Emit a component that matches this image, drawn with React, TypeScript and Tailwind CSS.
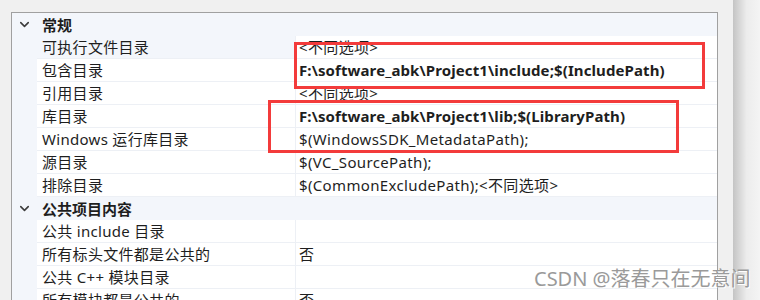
import { ChevronDown } from "lucide-react";

type Row = { name: string; value?: string; bold?: boolean; active?: boolean };

const general: Row[] = [
  { name: "可执行文件目录", value: "<不同选项>", active: true },
  { name: "包含目录", value: "F:\\software_abk\\Project1\\include;$(IncludePath)", bold: true },
  { name: "引用目录", value: "<不同选项>" },
  { name: "库目录", value: "F:\\software_abk\\Project1\\lib;$(LibraryPath)", bold: true },
  { name: "Windows 运行库目录", value: "$(WindowsSDK_MetadataPath);" },
  { name: "源目录", value: "$(VC_SourcePath);" },
  { name: "排除目录", value: "$(CommonExcludePath);<不同选项>" },
];

const publicItems: Row[] = [
  { name: "公共 include 目录" },
  { name: "所有标头文件都是公共的", value: "否" },
  { name: "公共 C++ 模块目录" },
  { name: "所有模块都是公共的", value: "否" },
];

const font = {
  fontFamily: '"Noto Sans", "Noto Sans CJK SC", sans-serif',
};

function Header({ title }: { title: string }) {
  return (
    <div className="flex h-[23px] items-center bg-[#f3f6fb]">
      <div className="flex w-[25px] justify-center">
        <ChevronDown className="h-[15px] w-[15px] text-[#3c3c3c]" strokeWidth={2.5} />
      </div>
      <span className="pl-[5px] text-[15px] font-bold leading-[22px] text-[#1e1e1e]">{title}</span>
    </div>
  );
}

function PropRow({ row }: { row: Row }) {
  return (
    <div className="flex h-[23px]">
      <div className="w-[25px] bg-[#f3f6fb]" />
      <div className="flex flex-1 border-b border-[#edf0f5]">
        <div
          className={
            row.active
              ? "w-[258px] bg-[#f3f6fb] pl-[5px] text-[15px] leading-[22px] tracking-[0.3px] text-[#1e1e1e] whitespace-nowrap"
              : "w-[258px] bg-white pl-[5px] text-[15px] leading-[22px] tracking-[0.3px] text-[#1e1e1e] whitespace-nowrap"
          }
        >
          {row.name}
        </div>
        <div
          className={
            row.bold
              ? "flex-1 border-l border-[#edf0f5] bg-white pl-[3px] text-[15px] font-bold leading-[22px] tracking-[0.1px] text-[#1e1e1e] whitespace-nowrap"
              : "flex-1 border-l border-[#edf0f5] bg-white pl-[3px] text-[15px] leading-[22px] tracking-[0.35px] text-[#1e1e1e] whitespace-nowrap"
          }
        >
          {row.value}
        </div>
      </div>
    </div>
  );
}

export default function App() {
  return (
    <div className="relative flex h-[300px] w-[760px] overflow-hidden bg-[#f0f0f0]" style={font}>
      <div className="pl-[11px] pt-[12px]">
        <div className="w-[707px] border-x border-t border-[#a0a0a0] bg-white">
          <Header title="常规" />
          {general.map((r) => (
            <PropRow key={r.name} row={r} />
          ))}
          <Header title="公共项目内容" />
          {publicItems.map((r) => (
            <PropRow key={r.name} row={r} />
          ))}
        </div>
      </div>

      {/* scrollbar shadow */}
      <div className="ml-[15px] h-full flex-1 bg-gradient-to-r from-[#c4c4c4] via-[#ececec] to-[#f4f4f4]" />

      {/* red marker boxes */}
      <div className="absolute left-[294px] top-[42px] h-[47px] w-[411px] border-[3px] border-[#f33b3b]" />
      <div className="absolute left-[268px] top-[100px] h-[53px] w-[411px] border-[3px] border-[#f33b3b]" />

      {/* watermark */}
      <div className="absolute left-[534px] top-[267px] whitespace-nowrap text-[20px] leading-[24px] text-[#9a9a9a] [text-shadow:1px_1px_0_#ffffff]">
        CSDN @落春只在无意间
      </div>
    </div>
  );
}
